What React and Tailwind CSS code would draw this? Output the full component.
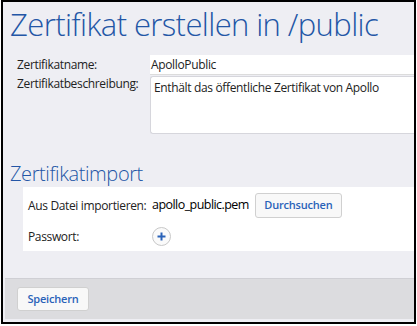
import React from 'react';

function App() {
    return (
        <div className="w-[417px] h-[326px] bg-white font-['Open_Sans',sans-serif]">
            <div className="ml-[1px] w-[415px] h-[324px] border-2 border-black bg-[#eeeef3] flex flex-col">
                {/* Header */}
                <h1 className="pl-[7px] pt-[2px] text-[31px] leading-[40px] font-light text-[#2356a6] tracking-[-0.6px] whitespace-nowrap">
                    Zertifikat erstellen in /public
                </h1>

                {/* Zertifikat fields */}
                <div className="mt-[11px] flex flex-col gap-[1px] text-[12px] tracking-[-0.35px] text-[#222]">
                    <div className="flex items-center">
                        <label className="w-[147px] pl-[14px] whitespace-nowrap">Zertifikatname:</label>
                        <div className="flex-1 h-[20px] bg-white border-b border-[#dcdcdc] pl-[1px] leading-[20px]">
                            ApolloPublic
                        </div>
                    </div>
                    <div className="flex items-start">
                        <label className="w-[147px] pl-[14px] leading-[16px] whitespace-nowrap">Zertifikatbeschreibung:</label>
                        <div className="flex-1 h-[58px] bg-white border border-r-0 border-[#d6d6dc] rounded-l-[3px] px-[3px] pt-[3px] leading-[16px] whitespace-nowrap">
                            Enthält das öffentliche Zertifikat von Apollo
                        </div>
                    </div>
                </div>

                {/* Zertifikatimport */}
                <h2 className="pl-[7px] mt-[27px] text-[20px] leading-[26px] font-light text-[#2356a6] tracking-[-0.4px]">
                    Zertifikatimport
                </h2>
                <div className="ml-[20px] bg-white pt-[6px] pb-[5px] flex flex-col gap-[9px] text-[12px] tracking-[-0.35px]">
                    <div className="flex items-center">
                        <span className="w-[129px] pl-[5px] text-[#222] whitespace-nowrap">Aus Datei importieren:</span>
                        <span className="text-[12.5px] text-black tracking-[-0.55px] whitespace-nowrap">apollo_public.pem</span>
                        <button className="ml-[6px] h-[25px] w-[87px] rounded-[3px] border border-[#d0d0d0] bg-[#f8f8f8] text-[11px] font-semibold text-[#2a62b8] tracking-[-0.2px]">
                            Durchsuchen
                        </button>
                    </div>
                    <div className="flex items-center">
                        <span className="w-[129px] pl-[5px] text-[#222]">Passwort:</span>
                        <button className="w-[19px] h-[19px] rounded-full border border-[#c8c8c8] bg-[#fafafa] flex items-center justify-center text-[#2a62b8]">
                            <svg width="9" height="9" viewBox="0 0 9 9">
                                <path d="M4.5 0.5v8M0.5 4.5h8" stroke="currentColor" strokeWidth="2" />
                            </svg>
                        </button>
                    </div>
                </div>

                {/* Footer */}
                <div className="mt-auto mb-[3px] ml-[2px] h-[41px] bg-[#dcdcdf] border-t border-[#cfcfd4] flex items-center pl-[12px]">
                    <button className="h-[24px] w-[72px] rounded-[3px] border border-[#d0d0d0] bg-[#f8f8f8] text-[11px] font-semibold text-[#2a62b8] tracking-[-0.2px]">
                        Speichern
                    </button>
                </div>
            </div>
        </div>
    );
}

export default App;
